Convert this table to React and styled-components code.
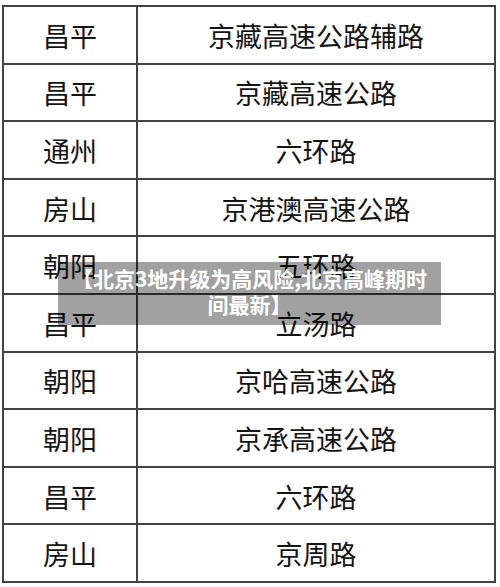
import styled, { createGlobalStyle } from "styled-components";

const GlobalStyle = createGlobalStyle`
  html, body {
    margin: 0;
    padding: 0;
    background: #ffffff;
  }
  body {
    font-family: "Noto Sans CJK SC", "Noto Sans", sans-serif;
  }
`;

const Page = styled.div`
  position: relative;
  width: 500px;
  height: 587px;
  padding: 5px 0 0 2px;
  box-sizing: border-box;
`;

const Table = styled.div`
  display: grid;
  grid-template-columns: 132px 1fr;
  grid-template-rows: repeat(10, 1fr);
  gap: 2px;
  width: 494px;
  height: 578px;
  padding: 2px;
  box-sizing: border-box;
  background: #424242;
`;

const Cell = styled.div`
  display: flex;
  align-items: center;
  justify-content: center;
  background: #ffffff;
  color: #141414;
  font-size: 27px;
  line-height: 1;
  padding-top: 1px;
`;

const Caption = styled.div`
  position: absolute;
  left: 58px;
  top: 262px;
  width: 383px;
  height: 63px;
  box-sizing: border-box;
  padding: 3px 10px 0;
  background: rgba(0, 0, 0, 0.37);
  color: #ffffff;
  font-size: 21px;
  font-weight: 700;
  line-height: 26px;
  text-align: center;
`;

const rows = [
  ["昌平", "京藏高速公路辅路"],
  ["昌平", "京藏高速公路"],
  ["通州", "六环路"],
  ["房山", "京港澳高速公路"],
  ["朝阳", "五环路"],
  ["昌平", "立汤路"],
  ["朝阳", "京哈高速公路"],
  ["朝阳", "京承高速公路"],
  ["昌平", "六环路"],
  ["房山", "京周路"],
];

export default function App() {
  return (
    <Page>
      <GlobalStyle />
      <Table>
        {rows.map(([district, road], i) => [
          <Cell key={`d${i}`}>{district}</Cell>,
          <Cell key={`r${i}`}>{road}</Cell>,
        ])}
      </Table>
      <Caption>【北京3地升级为高风险,北京高峰期时间最新】</Caption>
    </Page>
  );
}
